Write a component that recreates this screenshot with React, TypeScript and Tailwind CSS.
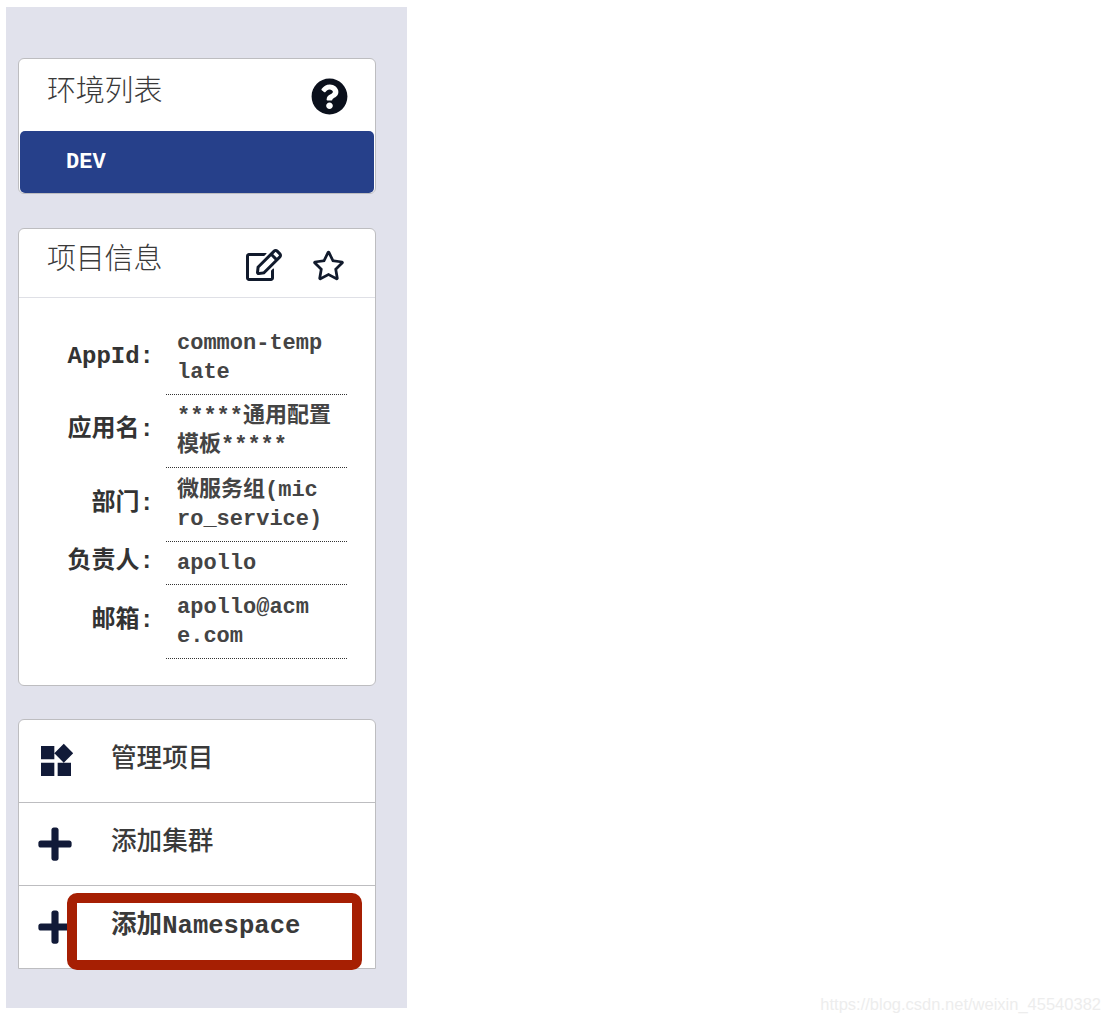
import React from "react"
import { FaPlus, FaQuestionCircle, FaRegEdit, FaRegStar } from "react-icons/fa"
import { MdWidgets } from "react-icons/md"

const rows = [
  { label: "AppId:", value: ["common-temp", "late"], height: "h-[73px]" },
  { label: "应用名:", value: ["*****通用配置", "模板*****"], height: "h-[73px]" },
  { label: "部门:", value: ["微服务组(mic", "ro_service)"], height: "h-[74px]" },
  { label: "负责人:", value: ["apollo"], height: "h-[43px]" },
  { label: "邮箱:", value: ["apollo@acm", "e.com"], height: "h-[74px]" },
]

export default function App() {
  return (
    <div className="relative h-[1022px] w-[1109px] bg-white pl-[6px] pt-[7px] font-['Liberation_Mono','Noto_Sans_CJK_SC',monospace]">
      <div className="flex h-[1001px] w-[401px] flex-col bg-[#e1e2ec] px-3 pt-[51px]">
        {/* Environment list */}
        <div className="h-[136px] w-[358px] rounded-[6px] border border-[#bdbdc0] bg-white">
          <div className="flex h-[70px] items-center justify-between pl-[28px] pr-[27px]">
            <h2 className="pb-[2px] text-[29px] leading-none font-light tracking-[-0.2px] text-[#3a3a3a]">环境列表</h2>
            <FaQuestionCircle className="mt-[4px] h-[37px] w-[37px] text-[#0b101c]" />
          </div>
          <div className="mx-px mt-[2px] flex h-[62px] items-center rounded-[5px] bg-[#26408a] pl-[46px] text-[22px] font-bold text-white">
            DEV
          </div>
        </div>

        {/* Project info */}
        <div className="mt-[34px] h-[458px] w-[358px] rounded-[6px] border border-[#bdbdc0] bg-white">
          <div className="flex h-[69px] items-center border-b border-[#dfe0e6] pl-[28px] pr-[30px]">
            <h2 className="flex-1 pb-[4px] text-[29px] leading-none font-light tracking-[-0.2px] text-[#3a3a3a]">项目信息</h2>
            <FaRegEdit className="mt-[4px] h-[34px] w-[36px] text-[#111a2c]" />
            <FaRegStar className="mt-[4px] ml-[30px] h-[31px] w-[33px] text-[#111a2c]" />
          </div>
          <div className="pt-[24px]">
            {rows.map((row) => (
              <div key={row.label} className={`flex ${row.height}`}>
                <div className="flex w-[135px] items-center justify-end pb-[3px] text-[24px] leading-none font-bold whitespace-nowrap text-[#333]">
                  {row.label}
                </div>
                <div className="ml-[12px] flex w-[181px] flex-col justify-center border-b border-dotted border-[#333] pl-[11px] text-[22px] leading-[29px] font-bold whitespace-nowrap text-[#444]">
                  {row.value.map((line) => (
                    <span key={line}>{line}</span>
                  ))}
                </div>
              </div>
            ))}
          </div>
        </div>

        {/* Actions */}
        <div className="mt-[33px] w-[358px] rounded-t-[6px] border border-[#bdbdc0] bg-white">
          <div className="flex h-[83px] items-center border-b border-[#bdbdc0] pl-[17px]">
            <MdWidgets className="h-[40px] w-[40px] text-[#111a38]" />
            <span className="ml-[35px] text-[25.6px] leading-none font-medium text-[#3a3a3a]">管理项目</span>
          </div>
          <div className="flex h-[83px] items-center border-b border-[#bdbdc0] pl-[17px]">
            <FaPlus className="h-[38px] w-[38px] text-[#111a38]" />
            <span className="ml-[37px] text-[25.6px] leading-none font-medium text-[#3a3a3a]">添加集群</span>
          </div>
          <div className="flex h-[82px] items-center pl-[17px]">
            <FaPlus className="h-[38px] w-[38px] text-[#111a38]" />
            <span className="ml-[37px] text-[25.6px] leading-none font-bold text-[#3a3a3a]">添加Namespace</span>
          </div>
        </div>
      </div>

      {/* Red annotation box */}
      <div className="absolute top-[893px] left-[67px] h-[77px] w-[295px] rounded-[10px] border-[10px] border-[#a61f03]" />

      {/* Watermark */}
      <span className="absolute top-[994px] right-[8px] font-['Liberation_Sans',sans-serif] text-[16.5px] leading-5 text-[#ededed]">
        https://blog.csdn.net/weixin_45540382
      </span>
    </div>
  )
}
